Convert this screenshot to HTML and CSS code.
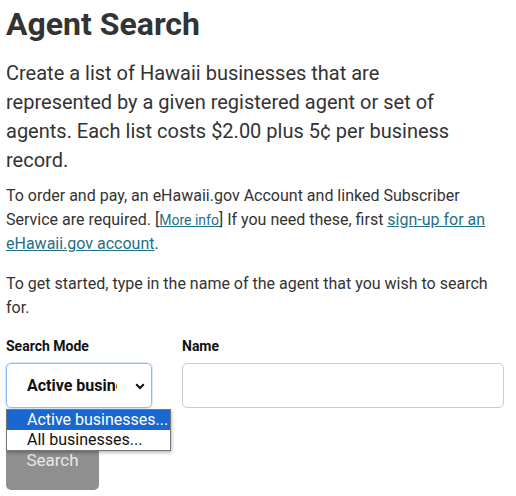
FILE: index.html
```html
<!DOCTYPE html>
<html>
<head>
<meta charset="utf-8">
<link rel="stylesheet" href="styles.css">
</head>
<body>
<main class="page">
  <h1 class="title">Agent Search</h1>
  <p class="lead">Create a list of Hawaii businesses that are represented by a given registered agent or set of agents. Each list costs $2.00 plus 5¢ per business record.</p>
  <p class="info">To order and pay, an eHawaii.gov Account and linked Subscriber Service are required. [<a class="more" href="#">More info</a>] If you need these, first <a class="link" href="#">sign-up for an eHawaii.gov account</a>.</p>
  <p class="info">To get started, type in the name of the agent that you wish to search for.</p>
  <form class="form">
    <div class="fields">
      <div class="field mode">
        <label class="label">Search Mode</label>
        <div class="select">
          <span class="select-text">Active businesses...</span>
          <svg class="chev" width="10" height="7" viewBox="0 0 10 7"><path d="M1.2 1.3 L5 5 L8.8 1.3" fill="none" stroke="#111" stroke-width="2"/></svg>
          <ul class="options">
            <li class="option selected">Active businesses...</li>
            <li class="option">All businesses...</li>
          </ul>
        </div>
      </div>
      <div class="field name">
        <label class="label">Name</label>
        <div class="input"></div>
      </div>
    </div>
    <button class="btn" type="button">Search</button>
  </form>
</main>
</body>
</html>
```
FILE: styles.css
```css
html, body {
  margin: 0;
  padding: 0;
  background: #fff;
}
body {
  font-family: Roboto, "Liberation Sans", sans-serif;
  color: #333;
}
.page {
  padding: 0 12px 0 6px;
}
.title {
  font-size: 32px;
  font-weight: 700;
  line-height: 38px;
  margin: 5px 0 0 0;
  color: #333;
}
.lead {
  font-size: 20px;
  line-height: 29px;
  margin: 16px 0 0 0;
  max-width: 480px;
}
.info {
  font-size: 16px;
  line-height: 24px;
  margin: 9px 0 0 0;
}
.info + .info {
  margin-top: 16px;
}
.more {
  font-size: 14px;
  color: #1f6f86;
}
.link {
  color: #1f6f86;
}
.form {
  margin-top: 16px;
}
.fields {
  display: flex;
  gap: 30px;
}
.mode {
  width: 146px;
}
.name {
  flex: 1;
}
.label {
  display: block;
  font-size: 14px;
  font-weight: 700;
  line-height: 20px;
  color: #111;
  margin-bottom: 7px;
}
.select {
  position: relative;
  box-sizing: border-box;
  height: 45px;
  border: 1px solid #8fbcf0;
  border-radius: 5px;
  box-shadow: 0 0 0 1px rgba(143, 188, 240, 0.35);
  display: flex;
  align-items: center;
  padding-left: 20px;
}
.select-text {
  font-size: 16px;
  font-weight: 700;
  color: #111;
  white-space: nowrap;
  overflow: hidden;
  width: 90px;
}
.chev {
  position: absolute;
  right: 6px;
  top: 19px;
}
.options {
  position: absolute;
  left: -1px;
  top: 45px;
  width: 165px;
  box-sizing: border-box;
  margin: 0;
  padding: 0;
  list-style: none;
  background: #fff;
  border: 1px solid #767676;
  box-shadow: 1px 2px 3px rgba(0, 0, 0, 0.25);
  z-index: 2;
}
.option {
  font-size: 16px;
  line-height: 20px;
  padding-left: 20px;
  color: #111;
  white-space: nowrap;
}
.option.selected {
  background: #1a67d2;
  color: #fff;
}
.input {
  box-sizing: border-box;
  height: 45px;
  border: 1px solid #ccc;
  border-radius: 5px;
}
.btn {
  margin-top: 32px;
  height: 50px;
  width: 93px;
  border: none;
  border-radius: 5px;
  background: #8f8f8f;
  color: #e8e8e8;
  font-family: Roboto, "Liberation Sans", sans-serif;
  font-size: 17px;
  padding: 0 0 10px 0;
}
```
